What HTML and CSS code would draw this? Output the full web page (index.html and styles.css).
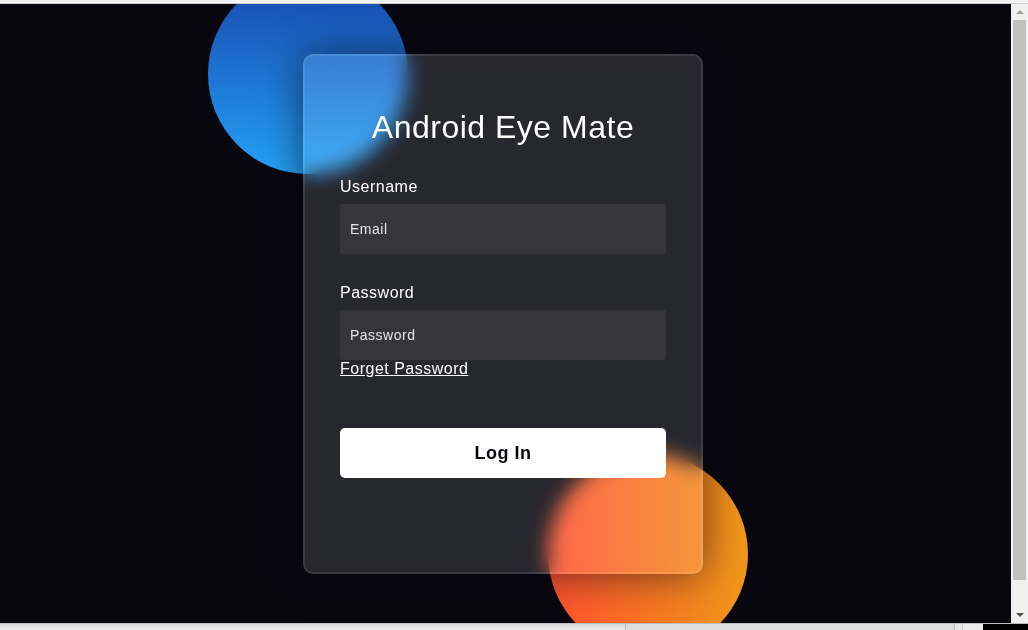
FILE: index.html
```html
<!DOCTYPE html>
<html lang="en">
<head>
<meta charset="utf-8">
<title>Android Eye Mate</title>
<link rel="stylesheet" href="styles.css">
</head>
<body>
<div class="topstrip"></div>
<div class="row">
  <main class="stage">
    <div class="background">
      <div class="shape shape-blue"></div>
      <div class="shape shape-orange"></div>
      <form class="card">
        <h3 class="title">Android Eye Mate</h3>
        <label class="label" for="username">Username</label>
        <input class="field" type="text" placeholder="Email" id="username">
        <label class="label" for="password">Password</label>
        <input class="field" type="password" placeholder="Password" id="password">
        <a class="forgot" href="#">Forget Password</a>
        <button class="btn" type="button">Log In</button>
      </form>
    </div>
  </main>
  <div class="vscroll">
    <div class="arrow arrow-up"></div>
    <div class="vthumb"></div>
    <div class="arrow arrow-down"></div>
  </div>
</div>
<div class="hbar">
  <div class="hbar-left"></div>
  <div class="hbar-thumb"></div>
  <div class="hbar-gap"></div>
  <div class="hbar-corner"></div>
</div>
</body>
</html>
```
FILE: styles.css
```css
* { box-sizing: border-box; margin: 0; padding: 0; }
html, body { width: 1028px; height: 630px; overflow: hidden; }
body {
  display: flex;
  flex-direction: column;
  background: #080710;
  font-family: "Liberation Sans", Arial, sans-serif;
}
.topstrip {
  height: 4px;
  flex: none;
  background: #f3f3f3;
  border-bottom: 1px solid #cfcfcf;
}
.row { display: flex; flex: 1; min-height: 0; }
.stage {
  flex: 1;
  display: flex;
  align-items: center;
  justify-content: center;
  padding-right: 5px;
  background: #080710;
  overflow: hidden;
}
.background {
  width: 430px;
  height: 520px;
  position: relative;
  flex: none;
}
.shape {
  position: absolute;
  width: 200px;
  height: 200px;
  border-radius: 50%;
}
.shape-blue {
  left: -80px;
  top: -80px;
  background: linear-gradient(#1845ad, #23a2f6);
}
.shape-orange {
  right: -30px;
  bottom: -80px;
  background: linear-gradient(to right, #ff512f, #f09819);
}
.card {
  position: relative;
  margin: 0 auto;
  width: 400px;
  height: 520px;
  background: rgba(255, 255, 255, 0.13);
  border: 2px solid rgba(255, 255, 255, 0.1);
  border-radius: 10px;
  box-shadow: 0 0 40px rgba(8, 7, 16, 0.6);
  backdrop-filter: blur(10px);
  -webkit-backdrop-filter: blur(10px);
  padding: 50px 35px;
  color: #ffffff;
  letter-spacing: 0.5px;
}
.title {
  font-size: 32px;
  font-weight: 500;
  line-height: 42px;
  text-align: center;
  letter-spacing: 0.5px;
}
.label {
  display: block;
  margin-top: 30px;
  font-size: 16px;
  font-weight: 500;
  line-height: 18px;
}
.field {
  display: block;
  width: 100%;
  height: 50px;
  margin-top: 8px;
  padding: 0 10px;
  border: none;
  outline: none;
  border-radius: 3px;
  background: rgba(255, 255, 255, 0.07);
  color: #ffffff;
  font-family: "Liberation Sans", Arial, sans-serif;
  font-size: 14px;
  font-weight: 300;
  letter-spacing: 0.5px;
}
.field::placeholder { color: #e5e5e5; }
.forgot {
  display: inline-block;
  color: #ffffff;
  font-size: 16px;
  line-height: 18px;
  text-decoration: underline;
}
.btn {
  display: block;
  width: 100%;
  margin-top: 50px;
  padding: 15px 0;
  border: none;
  border-radius: 5px;
  background: #ffffff;
  color: #080710;
  font-family: "Liberation Sans", Arial, sans-serif;
  font-size: 18px;
  font-weight: 600;
  line-height: 20px;
  letter-spacing: 0.5px;
  cursor: pointer;
}
.vscroll {
  width: 17px;
  flex: none;
  background: #f1f1f1;
  display: flex;
  flex-direction: column;
  align-items: center;
  padding: 0 2px;
}
.arrow {
  height: 16px;
  flex: none;
  width: 100%;
  display: flex;
  align-items: center;
  justify-content: center;
}
.arrow::before {
  content: "";
  width: 0;
  height: 0;
  border-left: 4px solid transparent;
  border-right: 4px solid transparent;
}
.arrow-up::before { border-bottom: 4px solid #a3a3a3; }
.arrow-down::before { border-top: 4px solid #505050; }
.vthumb {
  width: 100%;
  height: 560px;
  background: #c1c1c1;
  margin-bottom: auto;
}
.hbar {
  height: 7px;
  flex: none;
  display: flex;
  background: #e8e8e8;
  border-top: 1px solid #bdbdbd;
}
.hbar-left { width: 625px; flex: none; background: linear-gradient(#d6d6d6, #ececec); }
.hbar-thumb {
  width: 330px;
  flex: none;
  background: #dedede;
  border-left: 1px solid #bbbbbb;
  border-right: 1px solid #bbbbbb;
}
.hbar-gap { flex: 1; background: #ececec; border-left: 1px solid #c8c8c8; margin-left: 7px; }
.hbar-corner { width: 45px; flex: none; background: #000000; }
```
